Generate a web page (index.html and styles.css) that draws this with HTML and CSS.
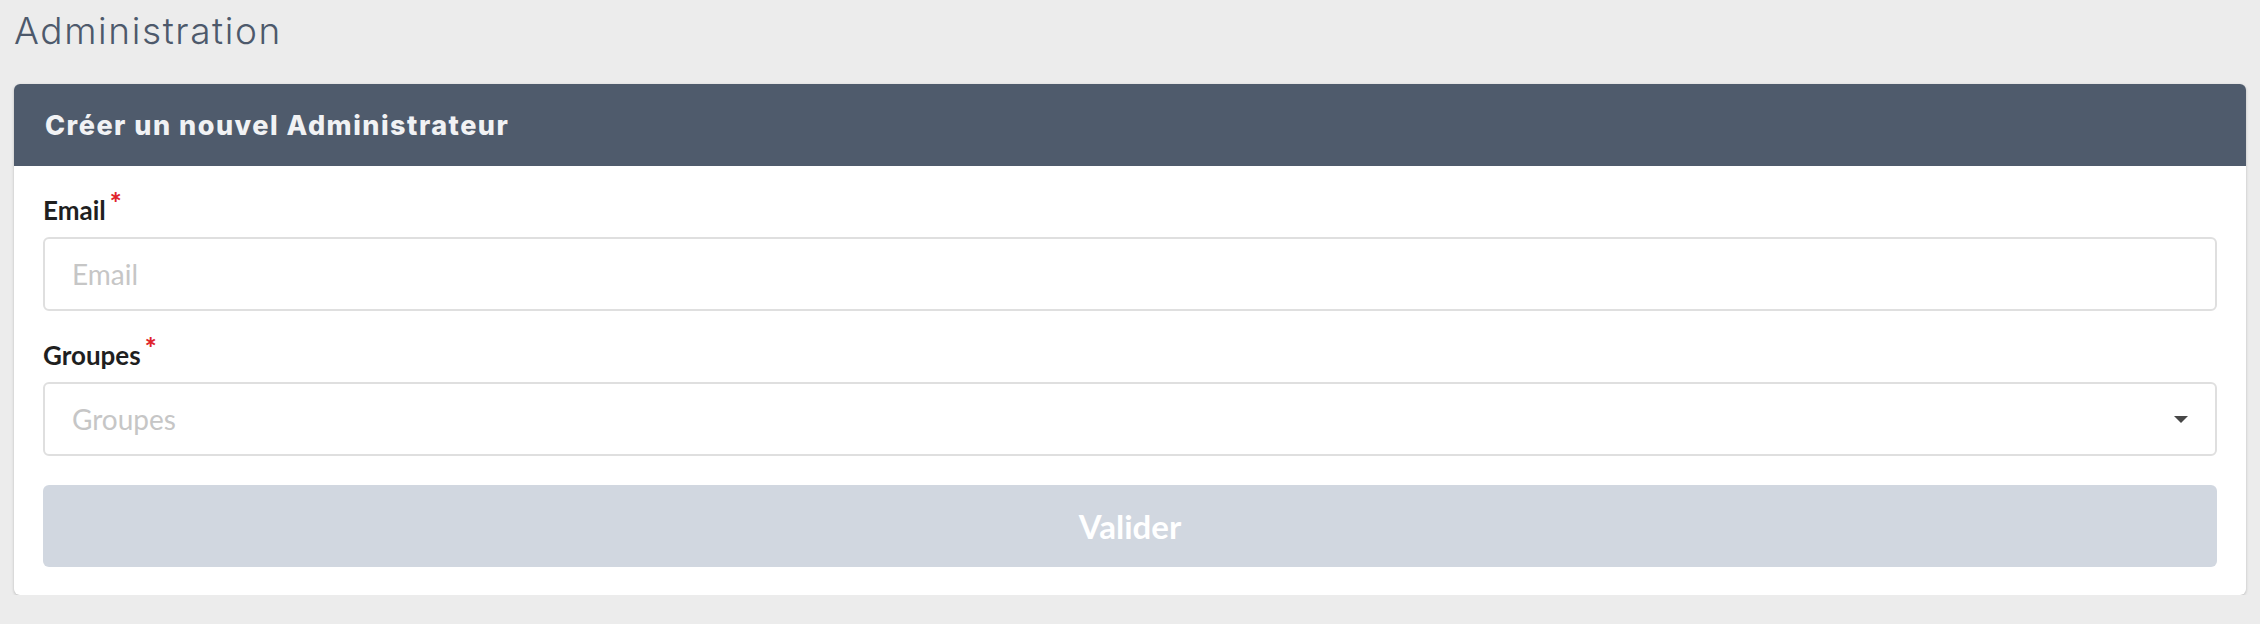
FILE: index.html
```html
<!DOCTYPE html>
<html lang="fr">
<head>
<meta charset="utf-8">
<title>Administration</title>
<link rel="stylesheet" href="styles.css">
</head>
<body>
<h1 class="page-title">Administration</h1>
<section class="card">
  <header class="card-header">
    <h2 class="card-title">Créer un nouvel Administrateur</h2>
  </header>
  <form class="card-body">
    <div class="field">
      <label class="field-label" for="email">Email<span class="req">*</span></label>
      <input class="field-input" id="email" type="text" placeholder="Email">
    </div>
    <div class="field">
      <label class="field-label">Groupes<span class="req">*</span></label>
      <div class="field-input select">
        <span class="placeholder">Groupes</span>
        <svg class="caret" width="14" height="7" viewBox="0 0 14 7"><path d="M0 0H14L7 7Z" fill="#474747"/></svg>
      </div>
    </div>
    <button class="submit" type="button">Valider</button>
  </form>
</section>
</body>
</html>
```
FILE: styles.css
```css
* { box-sizing: border-box; }

body {
  margin: 0;
  padding: 0 14px;
  background: #ececec;
  font-family: Lato, "Liberation Sans", sans-serif;
}

.page-title {
  margin: 0;
  height: 84px;
  padding-top: 8px;
  font-family: Inter, "Open Sans", sans-serif;
  font-weight: 300;
  font-size: 37px;
  line-height: 46px;
  color: #4d596b;
  letter-spacing: 1.6px;
}

.card {
  background: #fff;
  border-radius: 6px;
  box-shadow: 0 1px 3px rgba(0, 0, 0, 0.22);
  overflow: hidden;
}

.card-header {
  height: 82px;
  background: #4f5b6c;
  display: flex;
  align-items: center;
  padding: 0 31px;
}

.card-title {
  margin: 0;
  font-family: Inter, "Open Sans", sans-serif;
  font-weight: 800;
  font-size: 27px;
  letter-spacing: 1.5px;
  color: #f1f2f4;
}

.card-body {
  padding: 29px 29px 28px;
  display: flex;
  flex-direction: column;
  gap: 29px;
}

.field {
  display: flex;
  flex-direction: column;
  gap: 12px;
}

.field-label {
  font-weight: 700;
  font-size: 26px;
  line-height: 30px;
  color: #1f1f1f;
}

.req {
  color: #e0242b;
  font-size: 28px;
  font-weight: 900;
  vertical-align: top;
  position: relative;
  top: -8px;
  margin-left: 4px;
}

.field-input {
  height: 74px;
  border: 2px solid #dfdfdf;
  border-radius: 6px;
  padding: 0 27px;
  font-family: Lato, "Liberation Sans", sans-serif;
  font-size: 28px;
  color: #333;
  background: #fff;
  outline: none;
  width: 100%;
}

.field-input::placeholder { color: #c6c6c6; }

.select {
  display: flex;
  align-items: center;
  justify-content: space-between;
}

.placeholder { color: #c6c6c6; }

.submit {
  height: 82px;
  border: none;
  border-radius: 6px;
  background: #d1d7e0;
  color: #fff;
  font-family: Lato, "Liberation Sans", sans-serif;
  font-weight: 700;
  font-size: 33px;
  cursor: default;
}
```
